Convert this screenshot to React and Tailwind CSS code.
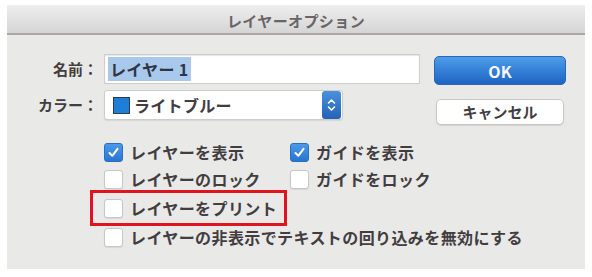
import React from 'react';

const font = { fontFamily: '"Noto Sans CJK JP", "Noto Sans", sans-serif' };

const Check = ({ checked }) =>
  checked ? (
    <span className="flex h-[19px] w-[19px] shrink-0 items-center justify-center rounded-[3px] border border-[#2a6fc4] bg-gradient-to-b from-[#4b9ae8] to-[#2a74d2]">
      <svg width="13" height="13" viewBox="0 0 13 13">
        <path d="M2.5 7 L5.3 9.8 L10.5 2.8" fill="none" stroke="#ffffff" strokeWidth="2" strokeLinecap="round" strokeLinejoin="round" />
      </svg>
    </span>
  ) : (
    <span className="h-[19px] w-[19px] shrink-0 rounded-[3px] border border-[#c9c6c6] bg-white shadow-[0_1px_1px_rgba(0,0,0,0.08)]" />
  );

const Option = ({ checked, label, className = '' }) => (
  <div className={`flex items-center gap-[7px] ${className}`}>
    <Check checked={checked} />
    <span className="text-[16px] font-bold leading-none tracking-[0.4px] text-[#423d40]">{label}</span>
  </div>
);

export default function App() {
  return (
    <div className="h-[277px] w-[592px] overflow-hidden bg-white pl-[7px] pt-[5px]" style={font}>
      <div className="relative flex h-[264px] w-[578px] flex-col bg-[#e9e9e7]">
        {/* Title bar */}
        <div className="flex h-[30px] items-center justify-center border-b-2 border-[#aca6a6] bg-gradient-to-b from-[#eeeeee] to-[#d5d5d5] pt-[5px]">
          <span className="text-[15px] font-bold tracking-[0.4px] text-[#6a6466]">レイヤーオプション</span>
        </div>

        {/* Body */}
        <div className="flex pt-[19px]">
          <div className="flex w-[413px] flex-col gap-[6px]">
            <div className="flex h-[30px] items-center">
              <span className="w-[93px] pr-[2px] text-right text-[15px] font-bold text-[#423d40]">名前：</span>
              <div className="ml-[4px] flex h-[30px] w-[316px] items-center border border-[#cfcccc] bg-white px-[3px] shadow-[inset_0_1px_1px_rgba(0,0,0,0.1)]">
                <span className="flex h-[24px] items-center bg-[#a9c9ec] pl-[2px] pr-[3px] text-[16px] font-bold tracking-[0.3px] text-[#2f3546]">
                  レイヤー 1
                </span>
              </div>
            </div>
            <div className="flex h-[30px] items-center">
              <span className="w-[93px] pr-[2px] text-right text-[15px] font-bold text-[#423d40]">カラー：</span>
              <div className="ml-[4px] flex h-[30px] w-[239px] items-center rounded-[3px] border border-[#cfcccc] bg-white pl-[8px] pr-[1px] shadow-[0_1px_1px_rgba(0,0,0,0.08)]">
                <span className="h-[17px] w-[17px] border border-[#2a3b55] bg-[#1f7fd6]" />
                <span className="ml-[4px] text-[16px] font-bold tracking-[0.3px] text-[#423d40]">ライトブルー</span>
                <span className="ml-auto flex h-[28px] w-[19px] items-center justify-center rounded-[3px] bg-gradient-to-b from-[#4a92dc] to-[#2462b8]">
                  <svg width="11" height="16" viewBox="0 0 11 16">
                    <path d="M2.5 6 L5.5 3 L8.5 6 M2.5 10 L5.5 13 L8.5 10" fill="none" stroke="#ffffff" strokeWidth="1.6" strokeLinecap="round" strokeLinejoin="round" />
                  </svg>
                </span>
              </div>
            </div>
          </div>

          <div className="ml-[14px] flex flex-col gap-[14px] pt-[2px]">
            <button className="flex h-[29px] w-[132px] items-center justify-center rounded-[5px] border border-[#2a66b8] bg-gradient-to-b from-[#4d9ce9] to-[#1e64c4] text-[16px] font-bold text-[#f4f8fd]">
              OK
            </button>
            <button className="ml-[2px] flex h-[26px] w-[128px] items-center justify-center rounded-[5px] border border-[#c9c6c6] bg-white text-[15px] font-bold text-[#423d40] shadow-[0_1px_1px_rgba(0,0,0,0.1)]">
              キャンセル
            </button>
          </div>
        </div>

        {/* Checkboxes */}
        <div className="mt-[14px] flex flex-col pl-[97px]">
          <div className="flex h-[26px] items-center">
            <Option checked label="レイヤーを表示" className="w-[186px]" />
            <Option checked label="ガイドを表示" />
          </div>
          <div className="flex h-[28px] items-center">
            <Option label="レイヤーのロック" className="w-[186px]" />
            <Option label="ガイドをロック" />
          </div>
          <div className="flex h-[30px] items-center">
            <Option label="レイヤーをプリント" />
          </div>
          <div className="flex h-[28px] items-center">
            <Option label="レイヤーの非表示でテキストの回り込みを無効にする" />
          </div>
        </div>

        {/* Annotation */}
        <div className="pointer-events-none absolute left-[83px] top-[185px] h-[36px] w-[197px] border-[3px] border-[#e0141e]" />
      </div>
    </div>
  );
}
